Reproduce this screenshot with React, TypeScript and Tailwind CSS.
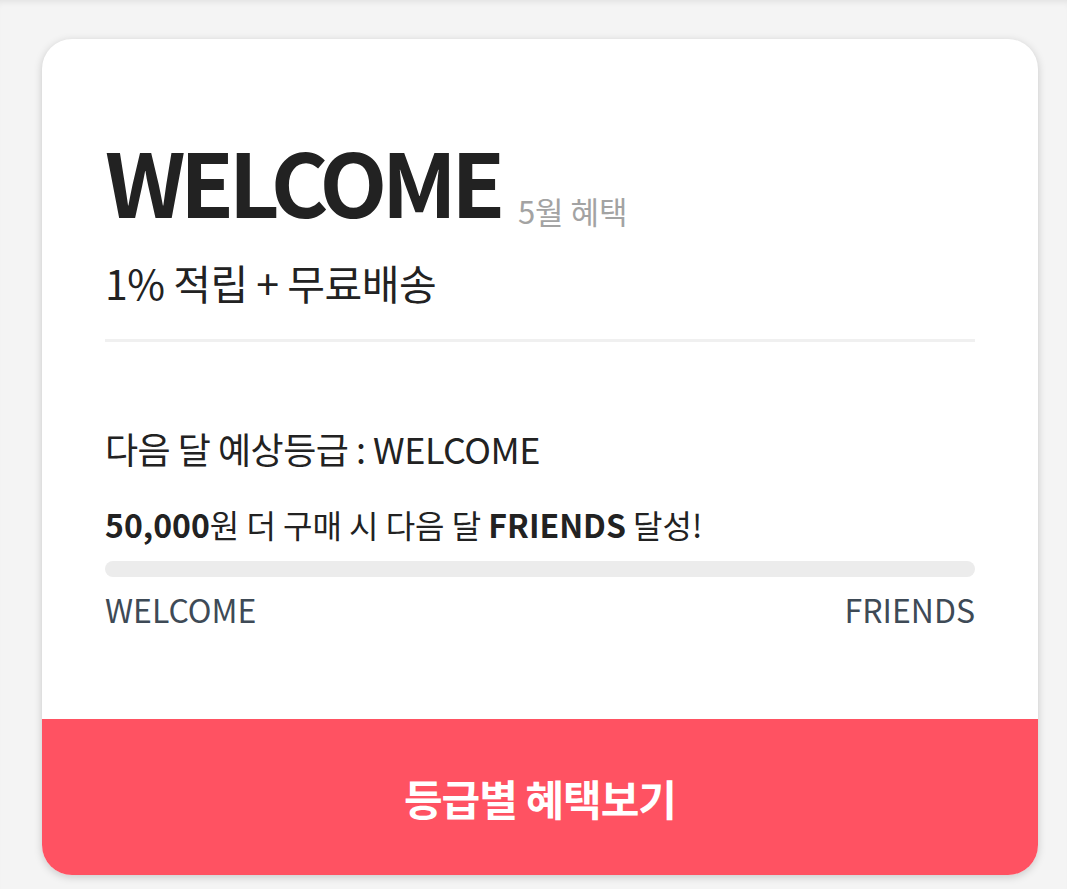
const font = {
  fontFamily: '"Noto Sans CJK KR", "Noto Sans", sans-serif',
};

const App = () => (
  <div
    className="min-h-[889px] bg-[#f4f4f4] pl-[42px] pr-[29px] pt-[39px] shadow-[inset_0_6px_6px_-4px_rgba(0,0,0,0.08)]"
    style={font}
  >
    <div className="overflow-hidden rounded-[30px] bg-white shadow-[0_2px_8px_rgba(0,0,0,0.18)]">
      <section className="px-[63px] pt-[91px]">
        <div className="flex items-baseline gap-[18px]">
          <h1 className="text-[88px] font-bold leading-[100px] tracking-[-5.5px] text-[#222]">
            WELCOME
          </h1>
          <span className="relative top-[6px] text-[31px] text-[#a3a3a3]">5월 혜택</span>
        </div>
        <p className="mt-[26px] text-[41px] leading-[52px] tracking-[-0.5px] text-[#222]">
          1% 적립 + 무료배송
        </p>
        <div className="mt-[31px] h-[3px] bg-[#f0f0f0]" />
      </section>

      <section className="px-[63px] pt-[82px] pb-[88px]">
        <p className="text-[36px] leading-[48px] tracking-[-0.5px] text-[#222]">
          다음 달 예상등급 : WELCOME
        </p>
        <p className="mt-[30px] text-[32px] leading-[44px] text-[#222]">
          <b className="font-bold">50,000</b>원 더 구매 시 다음 달{' '}
          <b className="font-bold">FRIENDS</b> 달성!
        </p>
        <div className="mt-[15px] h-[16px] rounded-full bg-[#ececec]" />
        <div className="mt-[10px] flex justify-between text-[32px] leading-[44px] text-[#3e4a56]">
          <span>WELCOME</span>
          <span>FRIENDS</span>
        </div>
      </section>

      <button className="flex h-[156px] w-full items-center justify-center bg-[#ff5262] text-[42px] font-bold tracking-[-1px] text-white">
        등급별 혜택보기
      </button>
    </div>
  </div>
);

export default App;
